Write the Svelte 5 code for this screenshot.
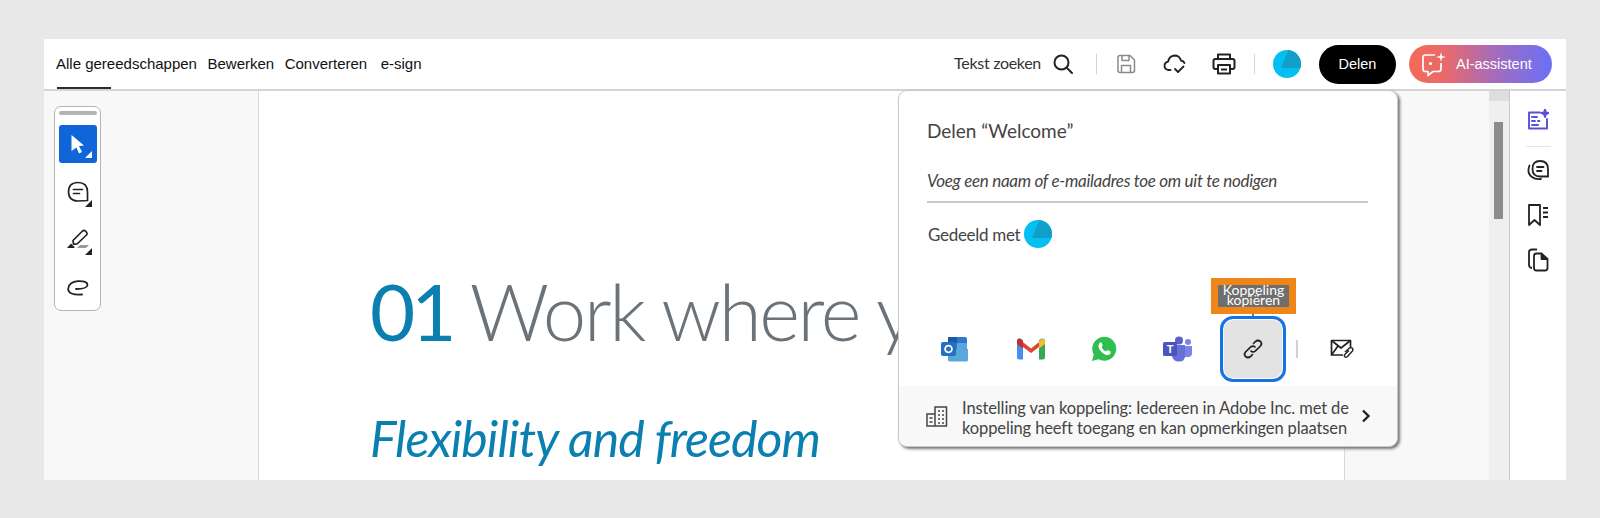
<script>
  const nav = ['Alle gereedschappen', 'Bewerken', 'Converteren', 'e-sign']
</script>

{#snippet avatar(size)}
  <svg class="avatar" width={size} height={size} viewBox="0 0 28 28">
    <circle cx="14" cy="14" r="14" fill="#04c0f2" />
    <path d="M8 18 L15.5 .1 A14 14 0 0 1 27.4 18 Z" fill="#0f9fc8" />
  </svg>
{/snippet}

<div class="frame">
  <header class="topbar">
    <nav class="tabs">
      {#each nav as item, i}
        <span class="tab" class:active={i === 0}>{item}</span>
      {/each}
    </nav>
    <div class="actions">
      <span class="find">Tekst zoeken</span>
      <svg class="i-search" width="22" height="22" viewBox="0 0 22 22" fill="none" stroke="#222" stroke-width="2" stroke-linecap="round"><circle cx="9.5" cy="9.5" r="7" /><path d="M14.6 14.6 L20 20" /></svg>
      <i class="vr first"></i>
      <svg class="i-save" width="20" height="20" viewBox="0 0 20 20" fill="none" stroke="#8a8a8a" stroke-width="1.5" stroke-linejoin="round"><path d="M2 3.5 Q2 1.5 4 1.5 H14 L18.5 6 V16.5 Q18.5 18.5 16.5 18.5 H4 Q2 18.5 2 16.5 Z" /><path d="M6 1.5 V6.5 H13 V1.5 M5.5 18.5 V11.5 H14.5 V18.5" /></svg>
      <svg class="i-cloud" width="24" height="22" viewBox="0 0 24 22" fill="none" stroke="#222" stroke-width="1.8" stroke-linecap="round" stroke-linejoin="round"><path d="M7.5 17 H5.5 Q1.5 16.5 1.5 12.5 Q1.8 9 5.2 8.6 Q6 3 11.5 2.5 Q16.5 2.5 18 7.5 Q20.5 8 21.5 10" /><path d="M12 16 L15 19 L20.5 13.5" /></svg>
      <svg class="i-print" width="24" height="22" viewBox="0 0 24 22" fill="none" stroke="#222" stroke-width="2" stroke-linejoin="round"><path d="M6 6 V1.5 H18 V6" /><path d="M6 16 H3.5 Q1.5 16 1.5 14 V8 Q1.5 6 3.5 6 H20.5 Q22.5 6 22.5 8 V14 Q22.5 16 20.5 16 H18" /><path d="M6 12 H18 V20.5 H6 Z M9 16.5 H15" /></svg>
      <i class="vr second"></i>
      {@render avatar(28)}
      <button class="share">Delen</button>
      <button class="ai">
        <svg width="26" height="26" viewBox="0 0 26 26" fill="none" stroke="#fff" stroke-width="1.7" stroke-linejoin="round"><path d="M14 4 H4.5 Q2 4 2 6.5 V18 Q2 20.5 4.5 20.5 H7 V24.5 L12 20.5 H17 Q20 20.5 20 18 V12" /><circle cx="9.5" cy="12.5" r="1.6" fill="#fff" stroke="none" /><path d="M20 1 L21 5 L25 6 L21 7 L20 11 L19 7 L15 6 L19 5 Z" fill="#fff" stroke="none" /></svg>
        AI-assistent
      </button>
    </div>
  </header>

  <div class="workspace">
    <aside class="left">
      <div class="toolbox">
        <div class="grip"></div>
        <div class="tool selected">
          <svg width="16" height="20" viewBox="0 0 16 20"><path d="M1.5 1 L14 11.5 L9 12 L12 18 L9 19.5 L6.5 13.5 L1.5 17 Z" fill="#fff" /></svg>
          <b class="corner white"></b>
        </div>
        <div class="tool">
          <svg width="22" height="22" viewBox="0 0 22 22" fill="none" stroke="#222" stroke-width="1.7" stroke-linecap="round"><path d="M11 1.5 Q20.5 1.5 20.5 11 V19.5 L11 20 Q1.5 20 1.5 10.8 Q1.5 1.5 11 1.5 Z" /><path d="M6.5 8.5 H15.5 M6.5 12.5 H12.5" /></svg>
          <b class="corner"></b>
        </div>
        <div class="tool">
          <svg width="24" height="22" viewBox="0 0 24 22"><g fill="none" stroke="#222" stroke-width="1.7" stroke-linejoin="round"><path d="M7 11.5 L16.5 2 Q18 .8 19.5 2 L20.5 3.2 Q21.5 4.5 20.5 6 L11 15 L7.5 15.2 Z" /></g><path d="M1 19 L5 14.5 L8.5 18 V19 Z" fill="#222" /><path d="M11 19 L14 16 H23 L20 19 Z" fill="#999" /></svg>
          <b class="corner"></b>
        </div>
        <div class="tool">
          <svg width="22" height="16" viewBox="0 0 22 16" fill="none" stroke="#222" stroke-width="1.8" stroke-linecap="round"><path d="M15 14.5 Q1 15.5 1.2 8.5 Q2 2 11 1.2 Q20.5 .8 20.5 5 Q20 9 9 9" /></svg>
        </div>
      </div>
    </aside>

    <main class="page">
      <h1><span class="num">01</span> Work where y</h1>
      <h2>Flexibility and freedom</h2>
    </main>

    <div class="gutter">
      <div class="scroll">
        <div class="scroll-up"></div>
        <div class="thumb"></div>
      </div>
    </div>

    <aside class="rail">
      <svg width="22" height="22" viewBox="0 0 22 22" fill="none" stroke="#5b4fd6" stroke-width="1.9" stroke-linecap="round" stroke-linejoin="round"><path d="M13 3.5 H2 V19.5 H20 V10" /><path d="M5 8 H10 M5 12 H8 M11 12 H12.5 M5 16 H11" /><path d="M18 .5 L19 3.5 L21.5 4 L19 5 L18 8 L17 5 L14.5 4 L17 3.5 Z" fill="#5b4fd6" /></svg>
      <i class="rail-rule"></i>
      <svg width="24" height="22" viewBox="0 0 24 22" fill="none" stroke="#222" stroke-width="1.8" stroke-linecap="round"><path d="M14 2 Q22 2 22 10 V17.5 H14 Q6.5 17.5 6.5 10 Q6.5 2 14 2 Z" /><path d="M11 8 H17.5 M11 12 H15.5" /><path d="M3.5 6.5 Q.5 14 6 18 Q9 20.5 15 20" /></svg>
      <svg width="22" height="24" viewBox="0 0 22 24" fill="none" stroke="#222" stroke-width="1.8" stroke-linejoin="round"><path d="M2 2 H13 V22 L7.5 17 L2 22 Z" /><path d="M16 5 H21 M16 9.5 H21 M16 14 H21" /></svg>
      <svg width="22" height="24" viewBox="0 0 22 24" fill="none" stroke="#222" stroke-width="1.8" stroke-linejoin="round"><path d="M5 20 Q2 19.5 2 17 V4 Q2 1.5 5 1.5 H10" /><path d="M7 8 Q7 5.5 9.5 5.5 H14.5 L20.5 11 V20 Q20.5 22.5 18 22.5 H9.5 Q7 22.5 7 20 Z" /><path d="M14.5 5.5 V11 H20.5" fill="#222" /></svg>
    </aside>

    <section class="popup">
      <h3>Delen “Welcome”</h3>
      <div class="invite">Voeg een naam of e-mailadres toe om uit te nodigen</div>
      <div class="shared">Gedeeld met {@render avatar(28)}</div>
      <div class="channels">
        <span class="channel">
          <svg width="28" height="26" viewBox="0 0 28 26"><path d="M7 1 H24 Q26 1 26 3 V13 H7 Z" fill="#2f79c8" /><path d="M7 1 H16 V7 H7 Z" fill="#1c5aa8" /><path d="M16 7 H26 V14 H16 Z" fill="#58a6de" /><path d="M7 13 H27 V24 Q27 25.5 25 25.5 H9 Q7 25.5 7 24 Z" fill="#5aa7dc" /><rect x="0" y="6" width="15" height="14" rx="2" fill="#2170c4" /><circle cx="7.5" cy="13" r="3.4" fill="none" stroke="#fff" stroke-width="1.8" /></svg>
        </span>
        <span class="channel">
          <svg width="28" height="22" viewBox="0 0 28 22"><path d="M0 4 Q0 0 3 .5 L6 2 V21.5 H2 Q0 21.5 0 19.5 Z" fill="#4a8cf0" /><path d="M22 2 L25 .5 Q28 0 28 4 V19.5 Q28 21.5 26 21.5 H22 Z" fill="#3aa657" /><path d="M2 1 L14 10.5 L26 1 L26 6 L14 15 L2 6 Z" fill="#dd4436" /><path d="M22 3 L26 .5 Q28 1 28 4 V6 L22 10.5 Z" fill="#f5bc2e" /><path d="M0 4 Q0 0 3 .5 L6 3 V10.5 L0 6 Z" fill="#c4302b" /></svg>
        </span>
        <span class="channel">
          <svg width="26" height="26" viewBox="0 0 26 26"><path d="M1 25 L2.7 18.5 A12 12 0 1 1 7.5 23.3 Z" fill="#2fbf4f" /><path d="M9 6.5 Q7 8 7.5 11 Q9 16 14 18.5 Q17.5 20 19.5 17.5 L19.5 15.5 L16.5 14 L15 15.5 Q12 14.5 10.5 11 L11.8 9.5 L10.5 6.5 Z" fill="#fff" /></svg>
        </span>
        <span class="channel">
          <svg width="30" height="26" viewBox="0 0 30 26"><circle cx="16" cy="4.5" r="4" fill="#5a62c4" /><circle cx="25" cy="6" r="3" fill="#7b83eb" /><path d="M21 10 H29 V17 Q29 21 25 21 H21 Z" fill="#7b83eb" /><path d="M9 9 H22 V20 Q22 25.5 16 25.5 Q10 25.5 9 20 Z" fill="#6870d6" /><rect x="0" y="6" width="14" height="14" rx="1.5" fill="#4b53bc" /><text x="7" y="17" text-anchor="middle" class="teams-t">T</text></svg>
        </span>
        <span class="link-wrap">
          <span class="tooltip"><span class="tip-inner">Koppeling<br />kopiëren</span></span>
          <span class="link-btn">
            <svg width="22" height="22" viewBox="0 0 22 22" fill="none" stroke="#222" stroke-width="1.7" stroke-linecap="round"><path d="M9 13 Q11 15 13.5 12.8 L18.5 8 Q20.5 5.5 18.5 3.5 Q16 1.5 13.5 3.5 L11.5 5.5" /><path d="M13 9 Q11 7 8.5 9.2 L3.5 14 Q1.5 16.5 3.5 18.5 Q6 20.5 8.5 18.5 L10.5 16.5" /></svg>
          </span>
        </span>
        <i class="sep"></i>
        <span class="channel mail">
          <svg width="24" height="20" viewBox="0 0 24 20" fill="none" stroke="#222" stroke-width="1.7" stroke-linejoin="round"><path d="M13 16 H1.5 V1.5 H20.5 V8" /><path d="M1.5 1.5 L11 9 L20.5 1.5 M1.5 16 L8 7" /><path d="M15 13 L19.5 9 Q21.5 8 22.5 9.5 Q23.5 11 22 12.5 L17.5 17.5 Q16 18.8 14.8 17.8 Q13.8 16.5 15 15.3 L19 11.5" stroke-width="1.4" /></svg>
        </span>
      </div>
      <footer class="link-setting">
        <svg width="22" height="22" viewBox="0 0 22 22" fill="none" stroke="#444" stroke-width="1.5"><path d="M1 21 V9 H9 V21 Z M9 21 V2 H20.5 V21 Z" /><path d="M3.5 13 H6.5 M3.5 17 H6.5 M12 6 H14 M16 6 H18 M12 10 H14 M16 10 H18 M12 14 H14 M16 14 H18 M12 18 H14 M16 18 H18" /></svg>
        <p>Instelling van koppeling: Iedereen in Adobe Inc. met de koppeling heeft toegang en kan opmerkingen plaatsen</p>
        <svg class="chev" width="10" height="14" viewBox="0 0 10 14" fill="none" stroke="#222" stroke-width="2.4"><path d="M2 1.5 L7.5 7 L2 12.5" /></svg>
      </footer>
    </section>
  </div>
</div>

<style>
  :global(body) {
    margin: 0;
    background: #e8e8e8;
  }
  .frame {
    box-sizing: border-box;
    height: 518px;
    padding: 39px 34px 38px 44px;
    display: flex;
    flex-direction: column;
    overflow: hidden;
    font-family: Lato, sans-serif;
    color: #444;
  }
  .topbar {
    flex: 0 0 52px;
    display: flex;
    justify-content: space-between;
    background: #fff;
    box-sizing: border-box;
    border-bottom: 2px solid #d4d4d4;
  }
  .tabs {
    display: flex;
    align-items: center;
    padding-left: 12px;
    height: 50px;
    font-family: 'Liberation Sans', Arial, sans-serif;
    font-size: 15px;
    color: #111;
  }
  .tab {
    position: relative;
    height: 50px;
    line-height: 50px;
    margin-right: 10.5px;
  }
  .tab:nth-child(3) {
    margin-right: 13.5px;
  }
  .tab.active::after {
    content: '';
    position: absolute;
    left: 1px;
    bottom: 0;
    width: 54px;
    height: 2px;
    background: #2c2c2c;
  }
  .actions {
    display: flex;
    align-items: center;
    height: 50px;
    padding-right: 14px;
  }
  .find {
    font-size: 16px;
    letter-spacing: -0.3px;
    color: #333;
    margin: 0 11px 4px 0;
  }
  .actions svg {
    flex: none;
  }
  .vr {
    width: 1px;
    height: 20px;
    background: #d4d4d4;
  }
  .vr.first {
    margin: 0 19px 0 22px;
  }
  .i-cloud {
    margin-left: 27px;
  }
  .i-print {
    margin-left: 25px;
  }
  .vr.second {
    margin: 0 18px 0 18px;
  }
  .avatar {
    display: block;
  }
  button {
    font-family: 'Liberation Sans', Arial, sans-serif;
    font-size: 14.5px;
    border: 0;
    color: #fff;
    padding: 0;
  }
  .share {
    width: 77px;
    height: 39px;
    margin-left: 18px;
    border-radius: 20px;
    background: #000;
  }
  .ai {
    width: 143px;
    height: 38px;
    margin-left: 13px;
    border-radius: 19px;
    background: linear-gradient(90deg, #f56a58 0%, #e9696a 25%, #a06cc0 62%, #6a70f8 100%);
    display: flex;
    align-items: center;
    gap: 9px;
    padding-left: 12px;
    box-sizing: border-box;
  }
  .workspace {
    position: relative;
    flex: 1;
    min-height: 0;
    display: flex;
  }
  .left {
    width: 214px;
    flex: none;
    background: #f8f8f8;
    padding: 15px 0 0 10px;
    box-sizing: border-box;
  }
  .toolbox {
    box-sizing: border-box;
    width: 47px;
    height: 205px;
    background: #fff;
    border: 1.5px solid #b4b4b4;
    border-radius: 7px;
    padding: 3.5px 3.5px;
  }
  .grip {
    height: 4px;
    border-radius: 2px;
    background: #b3b3b3;
    margin-bottom: 10px;
  }
  .tool {
    position: relative;
    height: 38px;
    margin-bottom: 10px;
    display: flex;
    align-items: center;
    justify-content: center;
    border-radius: 3px;
  }
  .tool.selected {
    background: #0f66d9;
  }
  .corner {
    position: absolute;
    right: 5px;
    bottom: 4px;
    width: 0;
    height: 0;
    border-left: 7px solid transparent;
    border-bottom: 7px solid #222;
  }
  .corner.white {
    right: 5px;
    bottom: 5px;
    border-bottom-color: #fff;
  }
  .page {
    width: 1087px;
    flex: none;
    box-sizing: border-box;
    background: #fff;
    border-left: 1px solid #d8d8d8;
    border-right: 1px solid #d8d8d8;
    padding: 166px 0 0 111px;
    overflow: hidden;
    white-space: nowrap;
  }
  h1 {
    margin: 0;
    font-weight: 300;
    font-size: 78px;
    line-height: 108px;
    letter-spacing: -2.3px;
    color: #6b7278;
  }
  .num {
    color: #0a7fb0;
    font-weight: 400;
    letter-spacing: -4px;
  }
  h2 {
    margin: 43px 0 0;
    font-weight: 400;
    font-style: italic;
    font-size: 50px;
    line-height: 60px;
    letter-spacing: -0.9px;
    color: #0a7fb0;
  }
  .gutter {
    flex: 1;
    background: #f8f8f8;
    display: flex;
    justify-content: flex-end;
  }
  .scroll {
    width: 21px;
    background: #efefef;
    border-right: 1px solid #c8c8c8;
    box-sizing: border-box;
  }
  .scroll-up {
    height: 10px;
    background: #dedede;
  }
  .thumb {
    width: 9px;
    height: 97px;
    margin: 21px 0 0 5px;
    background: #8c8c8c;
  }
  .rail {
    width: 56px;
    flex: none;
    background: #fff;
    display: flex;
    flex-direction: column;
    align-items: center;
    padding-top: 18px;
    box-sizing: border-box;
  }
  .rail-rule {
    width: 25px;
    height: 1px;
    background: #e4e4e4;
    margin: 15px 0 12px;
  }
  .rail svg:nth-of-type(3) {
    margin: 22px 0 21px;
  }
  .popup {
    position: absolute;
    left: 854px;
    top: -1px;
    width: 500px;
    height: 357px;
    box-sizing: border-box;
    background: #fff;
    border: 1px solid #c8c8c8;
    border-radius: 9px;
    box-shadow: 2px 2px 3px #777;
    padding: 26px 0 0 28px;
    display: flex;
    flex-direction: column;
  }
  h3 {
    margin: 0;
    font-weight: 400;
    font-size: 19px;
    line-height: 28px;
    color: #444;
  }
  .invite {
    width: 441px;
    margin-top: 25px;
    padding-bottom: 9px;
    border-bottom: 2px solid #c8c8c8;
    font-style: italic;
    font-size: 17px;
    line-height: 22px;
    letter-spacing: -0.3px;
    color: #444;
  }
  .shared {
    display: flex;
    align-items: center;
    gap: 4px;
    margin: 17px 0 0 1px;
    height: 28px;
    font-size: 17px;
    letter-spacing: -0.3px;
    color: #444;
  }
  .channels {
    display: flex;
    align-items: center;
    height: 66px;
    margin: 68px 0 0 -28px;
    position: relative;
  }
  .channel {
    position: absolute;
    top: 0;
    height: 66px;
    width: 40px;
    margin-left: -20px;
    display: flex;
    align-items: center;
    justify-content: center;
  }
  .channel:nth-child(1) { left: 56px; }
  .channel:nth-child(2) { left: 132px; }
  .channel:nth-child(3) { left: 205px; }
  .channel:nth-child(4) { left: 279px; }
  .channel.mail { left: 443px; }
  .teams-t {
    fill: #fff;
    font-family: 'Liberation Sans', sans-serif;
    font-weight: 700;
    font-size: 11px;
  }
  .link-wrap {
    position: absolute;
    left: 321px;
    top: 0;
  }
  .link-btn {
    box-sizing: border-box;
    width: 66px;
    height: 66px;
    display: flex;
    align-items: center;
    justify-content: center;
    background: #e3e3e3;
    border: 3px solid #1473e6;
    border-radius: 13px;
    box-shadow: inset 0 0 0 1px #fff;
  }
  .tooltip {
    position: absolute;
    left: -9px;
    top: -38px;
    width: 85px;
    height: 36px;
    box-sizing: border-box;
    background: #f08518;
    padding: 7px;
    text-align: center;
  }
  .tooltip::after {
    content: '';
    position: absolute;
    left: 41px;
    top: 36px;
    width: 2px;
    height: 2px;
    background: #777;
  }
  .tip-inner {
    display: block;
    height: 22px;
    background: #6e6e6e;
    color: #fff;
    font-size: 14px;
    line-height: 10px;
    white-space: nowrap;
  }
  .sep {
    position: absolute;
    left: 397px;
    top: 24px;
    width: 2px;
    height: 18px;
    background: #d0d0d0;
  }
  .link-setting {
    margin: 5px 0 0 -28px;
    height: 60px;
    background: #f8f8f8;
    border-radius: 0 0 9px 9px;
    display: flex;
    align-items: center;
    padding-left: 27px;
    box-sizing: border-box;
  }
  .link-setting p {
    margin: 4px 0 0 14px;
    width: 389px;
    font-size: 16.5px;
    line-height: 20px;
    letter-spacing: -0.12px;
    color: #444;
  }
  .chev {
    margin-left: 10px;
  }
</style>
